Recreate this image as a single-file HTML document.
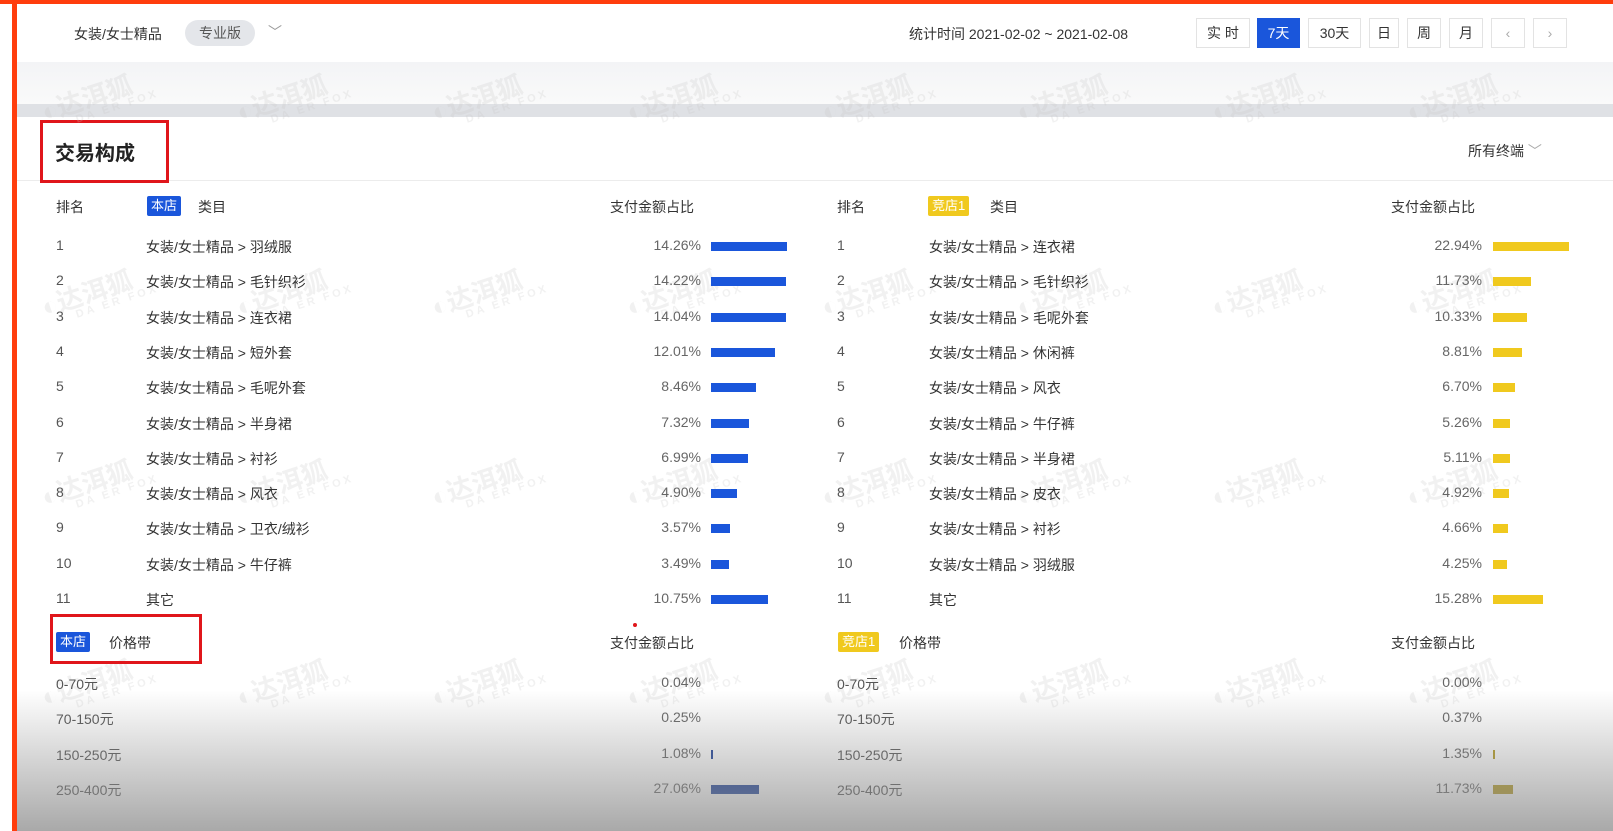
<!DOCTYPE html>
<html><head><meta charset="utf-8"><style>
*{margin:0;padding:0;box-sizing:border-box}
body{width:1613px;height:831px;overflow:hidden;background:#fff;font-family:"Liberation Sans","Noto Sans CJK SC",sans-serif;color:#333;font-size:14px;position:relative}
.a{position:absolute;white-space:nowrap}
.n{color:#555}
.p{color:#666;text-align:right;width:80px}
.bb{position:absolute;height:9px;background:#1a56db}
.yb{position:absolute;height:9px;background:#f0c91e}
.tag{position:absolute;color:#fff;font-size:13px;padding:0 4px;height:20px;line-height:20px;border-radius:2px}
.btn{position:absolute;top:18px;height:30px;border:1px solid #e3e3e3;line-height:28px;text-align:center;color:#333;font-size:14px;background:#fff}
.wm{position:absolute;color:rgba(200,200,200,.25);font-size:26px;font-weight:bold;transform:rotate(-18deg)}
.wm small{display:block;font-size:11px;letter-spacing:3px;margin-left:30px;margin-top:-6px}
</style></head><body>
<div class="a" style="left:0;top:0;width:1613px;height:4px;background:#ff3d0d"></div>
<div class="a" style="left:12px;top:0;width:5px;height:831px;background:#ff3d0d"></div>
<div class="a" style="left:17px;top:62px;width:1596px;height:44px;background:linear-gradient(#f3f4f6,#fafafa)"></div>
<div class="a" style="left:17px;top:104px;width:1596px;height:13px;background:#dfe1e5"></div>
<div class="a" style="left:17px;top:180px;width:1596px;height:1px;background:#ececec"></div>

<div class="a" style="left:74px;top:24px;font-size:14px">女装/女士精品</div>
<div class="a" style="left:185px;top:20px;width:70px;height:26px;border-radius:13px;background:#e4e6ea;font-size:14px;line-height:26px;text-align:center;color:#555">专业版</div>
<div class="a" style="left:268px;top:22px;color:#999;font-size:14px">﹀</div>
<div class="a" style="left:909px;top:24px">统计时间 2021-02-02 ~ 2021-02-08</div>
<div class="btn" style="left:1196px;width:54px">实 时</div>
<div class="btn" style="left:1257px;width:43px;background:#1a56db;color:#fff;border-color:#1a56db">7天</div>
<div class="btn" style="left:1308px;width:53px">30天</div>
<div class="btn" style="left:1369px;width:30px">日</div>
<div class="btn" style="left:1407px;width:34px">周</div>
<div class="btn" style="left:1449px;width:34px">月</div>
<div class="btn" style="left:1491px;width:34px;color:#aaa">‹</div>
<div class="btn" style="left:1533px;width:34px;color:#aaa">›</div>

<div class="a" style="left:55px;top:137px;font-size:20px;font-weight:bold;color:#222">交易构成</div>
<div class="a" style="left:40px;top:120px;width:129px;height:63px;border:3px solid #e0161b"></div>
<div class="a" style="left:1468px;top:141px;font-size:14px">所有终端 <span style="color:#aaa">﹀</span></div>

<div class="a" style="left:56px;top:197px">排名</div>
<div class="tag" style="left:147px;top:196px;background:#1a56db">本店</div>
<div class="a" style="left:198px;top:197px">类目</div>
<div class="a" style="left:610px;top:197px">支付金额占比</div>
<div class="a" style="left:837px;top:197px">排名</div>
<div class="tag" style="left:928px;top:196px;background:#f0c91e">竞店1</div>
<div class="a" style="left:990px;top:197px">类目</div>
<div class="a" style="left:1391px;top:197px">支付金额占比</div>

<div id="rows"></div>

<div class="a" style="left:50px;top:614px;width:152px;height:50px;border:3px solid #e0161b"></div>
<div class="tag" style="left:56px;top:632px;background:#1a56db">本店</div>
<div class="a" style="left:109px;top:633px">价格带</div>
<div class="a" style="left:610px;top:633px">支付金额占比</div>
<div class="tag" style="left:838px;top:632px;background:#f0c91e">竞店1</div>
<div class="a" style="left:899px;top:633px">价格带</div>
<div class="a" style="left:1391px;top:633px">支付金额占比</div>
<div class="a" style="left:633px;top:623px;width:4px;height:4px;border-radius:2px;background:#e0161b"></div>

<script>
var L=[["女装/女士精品 > 羽绒服","14.26%",76],["女装/女士精品 > 毛针织衫","14.22%",75],["女装/女士精品 > 连衣裙","14.04%",75],["女装/女士精品 > 短外套","12.01%",64],["女装/女士精品 > 毛呢外套","8.46%",45],["女装/女士精品 > 半身裙","7.32%",38],["女装/女士精品 > 衬衫","6.99%",37],["女装/女士精品 > 风衣","4.90%",26],["女装/女士精品 > 卫衣/绒衫","3.57%",19],["女装/女士精品 > 牛仔裤","3.49%",18],["其它","10.75%",57]];
var R=[["女装/女士精品 > 连衣裙","22.94%",76],["女装/女士精品 > 毛针织衫","11.73%",38],["女装/女士精品 > 毛呢外套","10.33%",34],["女装/女士精品 > 休闲裤","8.81%",29],["女装/女士精品 > 风衣","6.70%",22],["女装/女士精品 > 牛仔裤","5.26%",17],["女装/女士精品 > 半身裙","5.11%",17],["女装/女士精品 > 皮衣","4.92%",16],["女装/女士精品 > 衬衫","4.66%",15],["女装/女士精品 > 羽绒服","4.25%",14],["其它","15.28%",50]];
var h="";
for(var i=0;i<11;i++){var y=237+i*35.3;
h+='<div class="a n" style="left:56px;top:'+y+'px">'+(i+1)+'</div><div class="a" style="left:146px;top:'+y+'px">'+L[i][0]+'</div><div class="a p" style="left:621px;top:'+y+'px">'+L[i][1]+'</div><div class="bb" style="left:711px;top:'+(y+5)+'px;width:'+L[i][2]+'px"></div>';
h+='<div class="a n" style="left:837px;top:'+y+'px">'+(i+1)+'</div><div class="a" style="left:929px;top:'+y+'px">'+R[i][0]+'</div><div class="a p" style="left:1402px;top:'+y+'px">'+R[i][1]+'</div><div class="yb" style="left:1493px;top:'+(y+5)+'px;width:'+R[i][2]+'px"></div>';}
var P=[["0-70元","0.04%","0.00%",0,0],["70-150元","0.25%","0.37%",0,0],["150-250元","1.08%","1.35%",2,2],["250-400元","27.06%","11.73%",48,20]];
for(var j=0;j<4;j++){var y=674+j*35.3;
h+='<div class="a n" style="left:56px;top:'+y+'px">'+P[j][0]+'</div><div class="a p" style="left:621px;top:'+y+'px">'+P[j][1]+'</div><div class="bb" style="left:711px;top:'+(y+5)+'px;width:'+P[j][3]+'px;background:#1a3f99"></div>';
h+='<div class="a n" style="left:837px;top:'+y+'px">'+P[j][0]+'</div><div class="a p" style="left:1402px;top:'+y+'px">'+P[j][2]+'</div><div class="yb" style="left:1493px;top:'+(y+5)+'px;width:'+P[j][4]+'px;background:#b39a20"></div>';}
var w="";var ys=[75,270,460,660];
for(var r=0;r<4;r++)for(var c=0;c<8;c++){w+='<div class="wm" style="left:'+(40+c*195)+'px;top:'+ys[r]+'px">◐达洱狐<small>DA ER FOX</small></div>';}
document.getElementById('rows').innerHTML=w+h;
</script>
<div class="a" style="left:17px;top:690px;width:1596px;height:141px;background:linear-gradient(rgba(150,150,150,0),rgba(140,140,140,.75));pointer-events:none"></div>
</body></html>
